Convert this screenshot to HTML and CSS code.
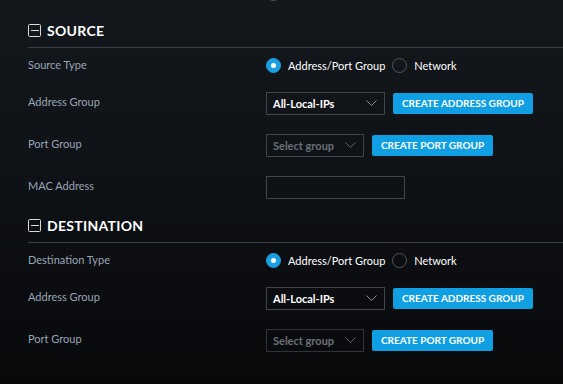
FILE: index.html
```html
<!DOCTYPE html>
<html>
<head>
<meta charset="utf-8">
<link rel="stylesheet" href="styles.css">
</head>
<body>
<div class="page">
  <div class="row row-type row-clipped">
    <div class="label"></div>
    <div class="control">
      <span class="radio"></span><span class="opt">Any (apply to all ports)</span>
    </div>
  </div>

  <div class="section-head first">
    <span class="toggle"></span><span class="title">SOURCE</span>
  </div>
  <div class="row row-type">
    <div class="label">Source Type</div>
    <div class="control">
      <span class="radio checked"></span><span class="opt">Address/Port Group</span>
      <span class="radio"></span><span class="opt">Network</span>
    </div>
  </div>
  <div class="row">
    <div class="label">Address Group</div>
    <div class="control">
      <div class="select wide"><span>All-Local-IPs</span><svg class="chev" width="11" height="6" viewBox="0 0 11 6"><path d="M0.5 0.5 L5.5 5.5 L10.5 0.5" fill="none" stroke="#8a9096" stroke-width="1"/></svg></div>
      <button class="btn">CREATE ADDRESS GROUP</button>
    </div>
  </div>
  <div class="row">
    <div class="label">Port Group</div>
    <div class="control">
      <div class="select narrow placeholder"><span>Select group</span><svg class="chev" width="11" height="6" viewBox="0 0 11 6"><path d="M0.5 0.5 L5.5 5.5 L10.5 0.5" fill="none" stroke="#5f656b" stroke-width="1"/></svg></div>
      <button class="btn">CREATE PORT GROUP</button>
    </div>
  </div>
  <div class="row">
    <div class="label">MAC Address</div>
    <div class="control">
      <input class="input" type="text">
    </div>
  </div>

  <div class="section-head">
    <span class="toggle"></span><span class="title">DESTINATION</span>
  </div>
  <div class="row row-type">
    <div class="label">Destination Type</div>
    <div class="control">
      <span class="radio checked"></span><span class="opt">Address/Port Group</span>
      <span class="radio"></span><span class="opt">Network</span>
    </div>
  </div>
  <div class="row">
    <div class="label">Address Group</div>
    <div class="control">
      <div class="select wide"><span>All-Local-IPs</span><svg class="chev" width="11" height="6" viewBox="0 0 11 6"><path d="M0.5 0.5 L5.5 5.5 L10.5 0.5" fill="none" stroke="#8a9096" stroke-width="1"/></svg></div>
      <button class="btn">CREATE ADDRESS GROUP</button>
    </div>
  </div>
  <div class="row">
    <div class="label">Port Group</div>
    <div class="control">
      <div class="select narrow placeholder dim"><span>Select group</span><svg class="chev" width="11" height="6" viewBox="0 0 11 6"><path d="M0.5 0.5 L5.5 5.5 L10.5 0.5" fill="none" stroke="#5f656b" stroke-width="1"/></svg></div>
      <button class="btn">CREATE PORT GROUP</button>
    </div>
  </div>
</div>
</body>
</html>
```
FILE: styles.css
```css
html, body {
  margin: 0;
  padding: 0;
  height: 100%;
}
body {
  background: linear-gradient(180deg, #14181c 0%, #0e1115 50%, #08090b 100%);
  font-family: Lato, "Open Sans", sans-serif;
  color: #fff;
  overflow: hidden;
}
.page {
  padding-left: 28px;
}
.row {
  display: grid;
  grid-template-columns: 238px 1fr;
  align-items: center;
  height: 42px;
}
.row-type {
  height: 34px;
}
.row-clipped {
  margin-top: -24px;
}
.row-clipped .opt {
  color: #5f666f;
}
.label {
  font-size: 11px;
  color: #99a5b6;
  padding-bottom: 3px;
}
.row-type .label {
  padding-bottom: 1px;
}
.control {
  display: flex;
  align-items: center;
}
.radio {
  width: 15px;
  height: 15px;
  box-sizing: border-box;
  border-radius: 50%;
  border: 1px solid #50565c;
  display: flex;
  align-items: center;
  justify-content: center;
  flex: none;
}
.radio.checked {
  background: #1a9fe0;
  border-color: #1a9fe0;
}
.radio.checked::after {
  content: "";
  width: 5px;
  height: 5px;
  border-radius: 50%;
  background: #fff;
}
.opt {
  font-size: 11px;
  color: #fff;
  margin-left: 7px;
  margin-right: 7px;
}
.section-head {
  height: 33px;
  border-bottom: 1px solid #3a4046;
  display: flex;
  align-items: center;
  padding-top: 1px;
}
.section-head.first {
  padding-top: 4px;
}
.toggle {
  width: 13px;
  height: 13px;
  box-sizing: border-box;
  border: 1.5px solid #d8dadc;
  border-radius: 1.5px;
  position: relative;
  margin-right: 6px;
  flex: none;
}
.toggle::after {
  content: "";
  position: absolute;
  left: 1.5px;
  right: 1.5px;
  top: 4.5px;
  height: 1.2px;
  background: #d8dadc;
}
.title {
  font-size: 14px;
  font-weight: 700;
  letter-spacing: 0.3px;
  color: #fff;
}
.select {
  height: 23px;
  box-sizing: border-box;
  border: 1px solid #3f454a;
  display: flex;
  align-items: center;
  justify-content: space-between;
  padding: 0 7px 0 6px;
  font-size: 11px;
  font-weight: 700;
  color: #fff;
  margin-right: 7px;
}
.select.wide {
  width: 119px;
}
.select.narrow {
  width: 98px;
}
.select.placeholder {
  color: #6a7077;
}
.select.dim {
  border-color: #2f3439;
}
.btn {
  height: 21px;
  border: none;
  border-radius: 2px;
  background: #0f9fe2;
  color: #fff;
  font-family: Lato, "Open Sans", sans-serif;
  font-weight: 700;
  font-size: 10px;
  letter-spacing: 0;
  padding: 0 9px;
  margin-left: 1px;
}
.input {
  width: 139px;
  height: 23px;
  box-sizing: border-box;
  border: 1px solid #3f454a;
  background: transparent;
  margin: 0;
}
```
